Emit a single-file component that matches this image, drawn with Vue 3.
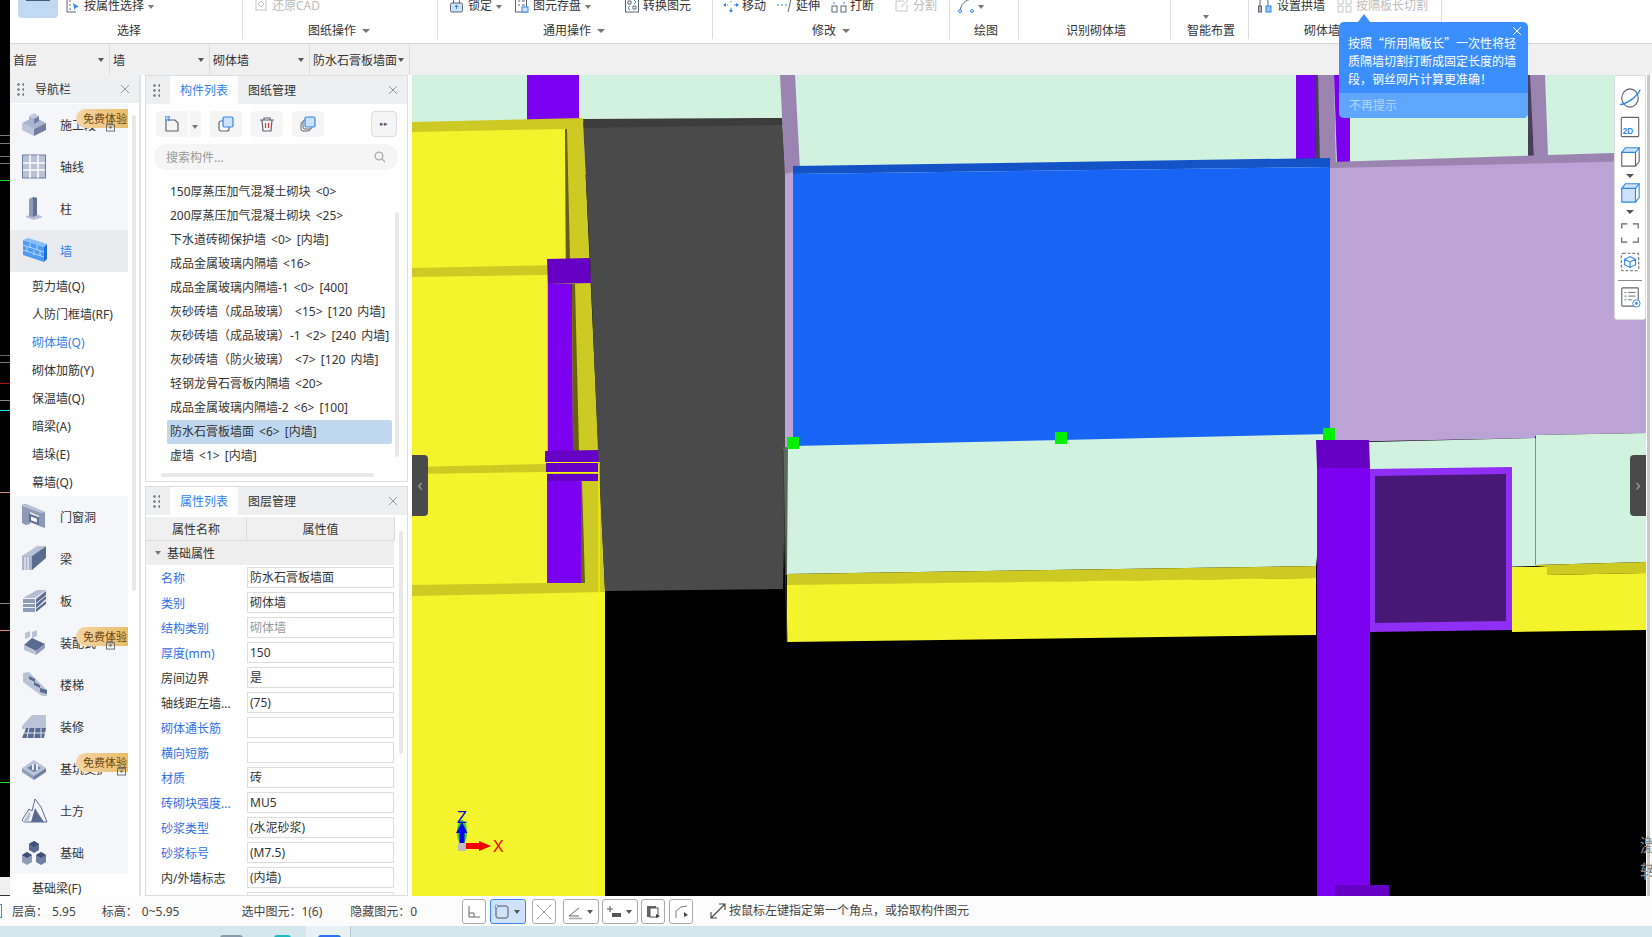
<script setup>
const D = '#5d6473'
const B = '#2f86ee'
const G = '#c4c4c4'
const ICONS = {
  attr: `<path d="M11 1H2v14h9" fill="none" stroke="${D}"/><path d="M4 4h2M4 8h2M4 12h2" stroke="${D}"/><path d="M8 6l6 4-3 .5L9.500 13z" fill="${B}"/>`,
  cad: `<path d="M3 2h10M3 13h10M3 1v13M13 1v13" stroke="${G}" fill="none"/><path d="M5 7l3-3 3 3-3 3z" fill="none" stroke="${G}"/>`,
  lock: `<rect x="1.500" y="6" width="12" height="9" rx="1.500" fill="#cfe2fb" stroke="${D}"/><path d="M4.500 6V3.500a3 3 0 016 0V6" fill="none" stroke="${D}"/><path d="M7.500 8v4M6 10l1.500-2 1.500 2" stroke="${B}" fill="none"/>`,
  save: `<rect x="1.500" y="1" width="11" height="14" fill="none" stroke="${D}"/><path d="M4 4h2M8 4h3M4 8h2M8 8h3" stroke="${D}"/><rect x="8" y="10" width="6" height="5" fill="#cfe2fb" stroke="${B}"/>`,
  conv: `<rect x="1.500" y="1" width="13" height="14" fill="none" stroke="${D}"/><path d="M4 4h3v3H4zM9 9h3v3H9z" fill="none" stroke="${D}"/><path d="M10 3l2 2-2 2M6 9l-2 2 2 2" stroke="${B}" fill="none"/>`,
  move: `<path d="M8 1v4M8 11v4M1 8h4M11 8h4" stroke="${B}" stroke-dasharray="2 1"/><path d="M8 0l2 3H6zM8 16l-2-3h4zM0 8l3-2v4zM16 8l-3 2V6z" fill="${B}"/>`,
  ext: `<path d="M0 8h2M4 8h2M8 8h2" stroke="${B}"/><path d="M14 2l-3 13" stroke="${D}" fill="none"/>`,
  brk: `<rect x="1" y="9" width="5" height="6" fill="none" stroke="${D}"/><rect x="10" y="9" width="5" height="6" fill="none" stroke="${D}"/><path d="M3 1v2M3 5v2M13 1v2M13 5v2" stroke="${B}"/><path d="M1 3l2-2 2 2M11 3l2-2 2 2" stroke="${B}" fill="none"/>`,
  cut: `<path d="M2 4h8M2 4v10h11V8" stroke="${G}" fill="none"/><path d="M7 10l7-7" stroke="${G}" fill="none"/>`,
  draw: `<path d="M2 14C3 7 7 3 14 2" fill="none" stroke="${D}"/><circle cx="2" cy="14" r="1.500" fill="#fff" stroke="${B}"/><circle cx="14" cy="14" r="1.500" fill="#fff" stroke="${B}"/>`,
  arch: `<path d="M2 15V4a4 4 0 018 0v11" fill="none" stroke="${D}"/><rect x="0.500" y="9" width="3" height="6" fill="none" stroke="${D}"/><rect x="8" y="9" width="5" height="6" fill="#9cc4f5" stroke="${B}"/>`,
  grid: `<path d="M1 1h5v6H1zM1 9h5v6H1zM9 1h5v6H9zM9 9h5v6H9z" fill="none" stroke="${G}"/>`,
  newdoc: `<path d="M2 4h9l3 3v8H2z" fill="none" stroke="${D}" stroke-width="1.200"/><path d="M1 0h5v5H1z" fill="#3a8ef0" opacity=".85"/><path d="M1 2h5M3 0v5" stroke="#fff" stroke-width=".6"/>`,
  copy: `<rect x="1" y="5" width="10" height="10" rx="2" fill="#fff" stroke="${D}" stroke-width="1.200"/><rect x="5" y="1" width="10" height="10" rx="1.500" fill="#cfe2fb" stroke="${B}" stroke-width="1.200"/>`,
  del: `<path d="M1 4h14M5 4V2h6v2M3 4l1 11h8l1-11" fill="none" stroke="${D}" stroke-width="1.200"/><path d="M6.500 7v5M9.500 7v5" stroke="#e33" stroke-width="1.200"/>`,
  multi: `<rect x="1" y="6" width="9" height="9" rx="2" fill="none" stroke="${D}"/><rect x="3" y="4" width="9" height="9" rx="2" fill="#fff" stroke="${D}"/><rect x="5" y="1" width="10" height="10" rx="1.500" fill="#cfe2fb" stroke="${B}" stroke-width="1.200"/>`
}
const NAV_ICONS = {
  seg: `<path d="M0 11L12 5l12 6-12 6z" fill="#a9b4cd"/><path d="M0 11l12 6v7L0 18z" fill="#bcc5d9"/><path d="M24 11l-12 6v7l12-6z" fill="#6f7fa3"/><path d="M7 4l5-3 5 3-5 3z" fill="#c3cbdd"/><path d="M7 4l5 3v5L7 9z" fill="#aab4cc"/><path d="M17 4l-5 3v5l5-3z" fill="#6f7fa3"/>`,
  axis: `<rect x="0.500" y="1" width="23" height="23" fill="#b9c3d8" stroke="#6a7ba0"/><path d="M8 1v23M16 1v23M1 9h22M1 16h22" stroke="#fff" stroke-width="1.500"/>`,
  col: `<path d="M3 21l9-4 9 4-9 3z" fill="#b4bdd3"/><path d="M7 3l4-2 4 1v17l-4 2-4-1z" fill="#8d9ab8"/><path d="M11 1l4 1v17l-4 2z" fill="#5f6f96"/>`,
  wall: `<path d="M1 2l21 7v15L1 17z" fill="#4d9bf3"/><path d="M1 2L6 0l19 6-3 3z" fill="#86bcf8"/><path d="M22 9l3-3v15l-3 3z" fill="#1b70e0"/><path d="M1 7l21 7M1 12l21 7M8 5v5M15 7v5M5 9v5M12 12v5M18 13v5" stroke="#cfe2fb" stroke-width=".8"/>`,
  door: `<path d="M0 1l4-1 19 8v16l-6-2V12L8 8v12l-4 1-4-2z" fill="#8c99b7"/><path d="M4 0l19 8-4 1L0 2z" fill="#b9c3d8"/><path d="M8 11l8 3v6l-8-3z" fill="none" stroke="#5f6f96" stroke-width="2"/>`,
  beam: `<path d="M0 10L20 0v14L10 24H0z" fill="#a9b4cd"/><path d="M10 10L24 0v12L10 24z" fill="#5a6b92"/><path d="M0 10L15 0h9L10 10z" fill="#b9c3d8"/><path d="M3 11v13M6 11v13" stroke="#fff"/>`,
  slab: `<path d="M1 10L15 2h9l-11 8z" fill="#b4bdd3"/><path d="M1 11h12v4H1zM1 16h12v3H1zM1 20h12v4H1z" fill="#8e9bb9"/><path d="M14 11l10-8v4l-10 8zM14 16l10-8v3l-10 9zM14 21l10-8v3l-10 8z" fill="#5a6b92"/>`,
  fab: `<path d="M2 15l8-7 13 6-9 7z" fill="#5a6b92"/><path d="M2 15l12 6v4L2 20z" fill="#b9c3d8"/><path d="M23 14v4l-9 7v-4z" fill="#8e9bb9"/><path d="M3 3l5-2v6l-5 2zM10 2l5-2v6l-5 2z" fill="#b9c3d8"/>`,
  stair: `<path d="M1 1l6-1 18 18v6h-5L1 10z" fill="#b9c3d8"/><path d="M7 4l6 3v3l-6-3zM12 10l6 3v3l-6-3zM18 16l7 2v4l-7-2z" fill="#5a6b92"/>`,
  deco: `<path d="M0 12L10 1h14v14H0z" fill="#b9c3d8"/><path d="M0 24l4-10h20l-2 10z" fill="#5a6b92"/><path d="M1 19h22M7 14l-2 10M13 14l-1 10M19 14v10" stroke="#dfe4ee"/>`,
  pit: `<path d="M0 12L12 4l12 8-12 8z" fill="#b9c3d8"/><path d="M0 12l12 8v4L0 16z" fill="#8e9bb9"/><path d="M24 12l-12 8v4l12-8z" fill="#6f7fa3"/><path d="M5 12l7-4 7 4-7 4z" fill="#6f7fa3"/><path d="M10 8h2v6h-2zM14 8h2v6h-2z" fill="#e6eaf2"/>`,
  earth: `<path d="M0 22L7 11l3 2L13 1l6 8 6 15H2z" fill="none" stroke="#5a6b92"/><path d="M9 24l4-14 3 5 6 9z" fill="#5a6b92"/><path d="M1 24l6-10 2 2-3 8z" fill="#b9c3d8"/>`,
  fnd: `<path d="M7 4l5-3 5 3v6l-5 3-5-3z" fill="#5a6b92"/><path d="M0 15l5-3 5 3v7l-5 3-5-3z" fill="#8e9bb9"/><path d="M14 15l5-3 5 3v7l-5 3-5-3z" fill="#6f7fa3"/><path d="M7 4l5 3 5-3-5-3zM0 15l5 3 5-3-5-3zM14 15l5 3 5-3-5-3z" fill="#3f4f78"/>`
}
const groups = [
  { w: 233, pad: 8, lx: 107, label: '选择', tools: [{ sel: true, w: 47 }, { icon: 'attr', text: '按属性选择', caret: true, w: 90 }] },
  { w: 195, pad: 10, lx: 65, label: '图纸操作', lc: true, tools: [{ icon: 'cad', text: '还原CAD', off: true, w: 100 }] },
  { w: 275, pad: 11, lx: 105, label: '通用操作', lc: true, tools: [{ icon: 'lock', text: '锁定', caret: true, w: 65 }, { icon: 'save', text: '图元存盘', caret: true, w: 110 }, { icon: 'conv', text: '转换图元', w: 80 }] },
  { w: 237, pad: 10, lx: 99, label: '修改', lc: true, tools: [{ icon: 'move', text: '移动', w: 54 }, { icon: 'ext', text: '延伸', w: 54 }, { icon: 'brk', text: '打断', w: 63 }, { icon: 'cut', text: '分割', off: true, w: 50 }] },
  { w: 69, pad: 8, lx: 24, label: '绘图', tools: [{ icon: 'draw', text: '', caret: true, w: 40 }] },
  { w: 152, pad: 0, lx: 47, label: '识别砌体墙', tools: [] },
  { w: 78, pad: 31, lx: 16, label: '智能布置', tools: [{ caret: true, text: '', w: 20, low: true }] },
  { w: 193, pad: 9, lx: 55, label: '砌体墙', tools: [{ icon: 'arch', text: '设置拱墙', w: 79 }, { icon: 'grid', text: '按隔板长切割', off: true, w: 100 }] }
]
const selects = ['首层', '墙', '砌体墙', '防水石膏板墙面']
const stripLines = [
  [135, '#777'], [143, '#777'], [156, '#777'], [163, '#777'], [180, '#19e619'], [355, '#666'], [362, '#777'],
  [383, '#a11'], [400, '#888'], [410, '#19e6e6'], [492, '#e58a70'], [603, '#888'], [630, '#e58a70'], [782, '#19e619']
]
const navItems = [
  { t: '施工段', i: 'seg', badge: true, lock: 46 },
  { t: '轴线', i: 'axis' },
  { t: '柱', i: 'col' },
  { t: '墙', i: 'wall', on: true },
  { t: '剪力墙(Q)', sub: true },
  { t: '人防门框墙(RF)', sub: true },
  { t: '砌体墙(Q)', sub: true, blue: true },
  { t: '砌体加筋(Y)', sub: true },
  { t: '保温墙(Q)', sub: true },
  { t: '暗梁(A)', sub: true },
  { t: '墙垛(E)', sub: true },
  { t: '幕墙(Q)', sub: true },
  { t: '门窗洞', i: 'door' },
  { t: '梁', i: 'beam' },
  { t: '板', i: 'slab' },
  { t: '装配式', i: 'fab', badge: true, lock: 46 },
  { t: '楼梯', i: 'stair' },
  { t: '装修', i: 'deco' },
  { t: '基坑支护', i: 'pit', badge: true, lock: 57 },
  { t: '土方', i: 'earth' },
  { t: '基础', i: 'fnd' },
  { t: '基础梁(F)', sub: true }
]
const listBtns = [
  { i: 'newdoc', c: 'tb-new' }, { i: 'copy', c: 'tb-a' }, { i: 'del', c: 'tb-b' }, { i: 'multi', c: 'tb-b' }
]
const parts = [
  '150厚蒸压加气混凝土砌块 <0>',
  '200厚蒸压加气混凝土砌块 <25>',
  '下水道砖砌保护墙 <0> [内墙]',
  '成品金属玻璃内隔墙 <16>',
  '成品金属玻璃内隔墙-1 <0> [400]',
  '灰砂砖墙（成品玻璃） <15> [120 内墙]',
  '灰砂砖墙（成品玻璃）-1 <2> [240 内墙]',
  '灰砂砖墙（防火玻璃） <7> [120 内墙]',
  '轻钢龙骨石膏板内隔墙 <20>',
  '成品金属玻璃内隔墙-2 <6> [100]',
  '防水石膏板墙面 <6> [内墙]',
  '虚墙 <1> [内墙]'
]
const props = [
  { n: '名称', v: '防水石膏板墙面', b: 1 },
  { n: '类别', v: '砌体墙', b: 1 },
  { n: '结构类别', v: '砌体墙', b: 1, g: 1 },
  { n: '厚度(mm)', v: '150', b: 1 },
  { n: '房间边界', v: '是' },
  { n: '轴线距左墙...', v: '(75)' },
  { n: '砌体通长筋', v: '', b: 1 },
  { n: '横向短筋', v: '', b: 1 },
  { n: '材质', v: '砖', b: 1 },
  { n: '砖砌块强度...', v: 'MU5', b: 1 },
  { n: '砂浆类型', v: '(水泥砂浆)', b: 1 },
  { n: '砂浆标号', v: '(M7.5)', b: 1 },
  { n: '内/外墙标志', v: '(内墙)' },
  { n: '', v: '' }
]
const OL = '#cdca23', Y = '#f3f42b', P = '#7b00f0', DP = '#6500c4', M = '#d0f2df', L = '#bca3d6', LD = '#9b84b0', SH = '#66600f'
const shapes = [
  [M, '412,75 1646,75 1646,175 412,175'],
  [P, '527,75 579,75 579,122 527,122'],
  [P, '1296,75 1317,75 1317,162 1296,162'],
  ['#4a3f5a', '1316,75 1320,75 1322,165 1316,165'],
  [LD, '1318,75 1334,75 1336,165 1320,165'],
  [P, '1334,75 1350,75 1350,165 1337,165'],
  ['#4a3f5a', '1528,75 1533,75 1534,158 1528,158'],
  [LD, '1530,75 1545,75 1548,156 1534,158'],
  // left yellow block
  [OL, '412,122 583,118 605,590 605,896 412,896'],
  [Y, '412,132 565,129 565,265 412,268'],
  [SH, '565,129 567,129 570,259 566,259'],
  [Y, '412,277 547,275 547,464 412,467'],
  [Y, '412,474 547,472 547,583 412,585'],
  [Y, '412,596 605,592 605,896 412,896'],
  [DP, '547,259 590,258 591,283 548,284'],
  [P, '548,284 572,284 573,451 548,451'],
  [SH, '572,284 575,284 579,451 573,451'],
  [DP, '545,451 599,450 599,462 545,462'],
  [DP, '546,463 598,463 598,472 546,472'],
  [DP, '547,474 598,474 598,481 547,481'],
  [P, '547,481 581,481 581,583 547,583'],
  [SH, '581,481 582,481 585,583 581,583'],
  // grey wall
  ['#4a4a4a', '583,122 782,119 786,174 786,447 783,589 605,591 598,450 590,258'],
  ['#3c3c3c', '583,119 782,118 783,125 584,128'],
  // centre
  [LD, '780,75 795,75 800,170 785,176'],
  [L, '785,174 793,172 793,448 785,448'],
  ['#5a6a62', '783,447 788,447 788,575 785,575'],
  [M, '788,447 793,445 1330,432 1316,566 787,574'],
  [OL, '787,574 1316,566 1316,578 787,586'],
  [Y, '787,585 1316,578 1316,635 787,642'],
  ['#1452c8', '793,166 1330,158 1330,167 793,174'],
  ['#1864f5', '793,174 1330,167 1330,434 793,446'],
  // right wall
  [LD, '1330,162 1646,152 1646,162 1330,169'],
  [L, '1330,168 1646,161 1646,433 1536,435 1535,438 1330,442'],
  [M, '1369,442 1536,438 1536,566 1369,570'],
  [M, '1536,435 1646,433 1646,562 1536,565'],
  [OL, '1536,565 1646,562 1646,573 1547,575 1547,567 1536,566'],
  [Y, '1512,567 1547,567 1547,575 1646,573 1646,630 1512,632'],
  ['#8f2ff5', '1370,469 1512,467 1512,630 1370,632'],
  ['#471876', '1375,476 1506,474 1506,621 1375,623'],
  [DP, '1316,440 1369,440 1370,468 1317,468'],
  [P, '1317,468 1370,468 1370,896 1317,896'],
  [DP, '1335,885 1389,885 1389,896 1335,896']
]
const handles = [[787, 437], [1055, 432], [1323, 428]]
</script>

<template>
  <div class="screen">
    <div class="top">
      <div class="strip">
        <i v-for="l in stripLines" :key="l[0]" class="strip-line" :style="{ top: l[0] + 'px', background: l[1] }"></i>
        <i class="strip-end"></i>
      </div>
      <div class="main">
        <header class="ribbon">
          <section v-for="g in groups" :key="g.label" class="group" :style="{ width: g.w + 'px' }">
            <div class="tools" :style="{ paddingLeft: g.pad + 'px' }">
              <div v-for="(t, n) in g.tools" :key="n" class="tool" :class="{ off: t.off, low: t.low }" :style="{ width: t.w + 'px' }">
                <span v-if="t.sel" class="sel-btn"><i></i></span>
                <svg v-if="t.icon" class="tool-icon" viewBox="0 0 16 16" v-html="ICONS[t.icon]"></svg>
                <span v-if="t.text">{{ t.text }}</span>
                <i v-if="t.caret" class="caret"></i>
              </div>
            </div>
            <div class="group-label" :style="{ paddingLeft: g.lx + 'px' }">{{ g.label }}<i v-if="g.lc" class="caret big"></i></div>
          </section>
        </header>
        <div class="selects">
          <div v-for="s in selects" :key="s" class="select"><span>{{ s }}</span><i class="caret"></i></div>
        </div>
        <div class="work">
          <aside class="nav">
            <div class="panel-head">
              <span class="grip"></span>
              <span class="nav-title">导航栏</span>
              <svg class="close" viewBox="0 0 10 10"><path d="M1 1l8 8M9 1l-8 8" stroke="#999" fill="none"/></svg>
            </div>
            <div class="nav-body">
              <div class="nav-list">
                <div v-for="it in navItems" :key="it.t" class="nav-item" :class="{ sub: it.sub, on: it.on, blue: it.blue || it.on }">
                  <svg v-if="it.i" class="nav-icon" viewBox="0 0 26 26" v-html="NAV_ICONS[it.i]"></svg>
                  <span>{{ it.t }}</span>
                  <span v-if="it.badge" class="badge">免费体验</span>
                  <svg v-if="it.lock" class="lock" :style="{ left: it.lock + 50 + 'px' }" viewBox="0 0 10 10"><rect x="0.500" y="2.500" width="9" height="7" fill="none" stroke="#5d6473"/><path d="M3 2.500V1h4v1.500" fill="none" stroke="#5d6473"/><circle cx="5" cy="5.500" r="1.300" fill="#5d6473"/></svg>
                </div>
              </div>
              <i class="nav-scroll"></i>
            </div>
          </aside>
          <div class="side">
            <section class="list-panel">
              <div class="panel-head">
                <span class="grip"></span>
                <span class="tab active">构件列表</span>
                <span class="tab">图纸管理</span>
                <svg class="close" viewBox="0 0 10 10"><path d="M1 1l8 8M9 1l-8 8" stroke="#999" fill="none"/></svg>
              </div>
              <div class="list-tools">
                <template v-for="b in listBtns" :key="b.i">
                  <button class="tb" :class="b.c"><svg viewBox="0 0 16 16" v-html="ICONS[b.i]"></svg></button>
                  <button v-if="b.i === 'newdoc'" class="tb-drop"><i class="caret"></i></button>
                </template>
                <button class="tb-more">▸▸</button>
              </div>
              <div class="search">
                <span>搜索构件...</span>
                <svg viewBox="0 0 12 12"><circle cx="5" cy="5" r="3.800" fill="none" stroke="#aaa" stroke-width="1.300"/><path d="M8 8l3 3" stroke="#aaa" stroke-width="1.300"/></svg>
              </div>
              <ul class="parts">
                <li v-for="(p, n) in parts" :key="p" :class="{ cur: n === 10 }">{{ p }}</li>
              </ul>
              <i class="list-vscroll"></i>
              <i class="list-hscroll"></i>
            </section>
            <section class="prop-panel">
              <div class="panel-head">
                <span class="grip"></span>
                <span class="tab active">属性列表</span>
                <span class="tab">图层管理</span>
                <svg class="close" viewBox="0 0 10 10"><path d="M1 1l8 8M9 1l-8 8" stroke="#999" fill="none"/></svg>
              </div>
              <div class="prop-head"><span>属性名称</span><span>属性值</span></div>
              <div class="prop-group"><i class="caret"></i>基础属性</div>
              <div v-for="(r, n) in props" :key="n" class="prop-row">
                <span class="prop-name" :class="{ link: r.b }">{{ r.n }}</span>
                <span class="prop-val" :class="{ gray: r.g }">{{ r.v }}</span>
              </div>
              <i class="prop-scroll"></i>
            </section>
          </div>
          <main class="view">
            <svg class="scene" viewBox="412 75 1234 821" preserveAspectRatio="none">
              <polygon v-for="(s, n) in shapes" :key="n" :points="s[1]" :fill="s[0]" />
              <path d="M546 462.500H599V896M546 472.500H598" fill="none" stroke="#f7f700" stroke-width="1.200" />
              <path d="M783 450L787 642" stroke="#3d3d2a" fill="none" />
              <path d="M1535.500 438V565" stroke="#7d8f86" fill="none" />
              <rect v-for="h in handles" :key="h[0]" :x="h[0]" :y="h[1]" width="12" height="12" fill="#00f000" />
              <ellipse cx="462" cy="832" rx="5" ry="12" fill="#2fd02f" />
              <rect x="458" y="843" width="8" height="8" fill="#bdbdbd" />
              <path d="M459.500 843V833H456L462 822L467.500 833H464.500V843Z" fill="#0000f0" />
              <path d="M466 843H479V841L491 846L479 851V849H466Z" fill="#f00000" />
              <text x="457" y="823" class="axis-z">Z</text>
              <text x="493" y="852" class="axis-x">X</text>
            </svg>
            <div class="handle left">‹</div>
            <div class="handle right">›</div>
            <div class="view-tools">
              <svg viewBox="0 0 24 24"><ellipse cx="12" cy="12" rx="9" ry="10" fill="none" stroke="#5d6473" stroke-width="1.200"/><path d="M1 19C7 19 20 11 23 3" fill="none" stroke="#2f86ee" stroke-width="1.500"/></svg>
              <svg viewBox="0 0 24 24"><rect x="2.500" y="1.500" width="19" height="21" rx="1" fill="none" stroke="#5d6473" stroke-width="1.200"/><text x="4" y="20" class="t2d">2D</text></svg>
              <svg viewBox="0 0 24 24"><path d="M3 8h15v15H3z" fill="#fff" stroke="#5d6473" stroke-width="1.200"/><path d="M3 8l4-5h15l-4 5z" fill="#cfe2fb" stroke="#2f86ee" stroke-width="1.200"/><path d="M18 23l4-5V3" fill="none" stroke="#5d6473" stroke-width="1.200"/></svg>
              <i class="vt-caret"></i>
              <svg viewBox="0 0 24 24"><path d="M3 8h15v15H3z" fill="#cfe2fb" stroke="#2f86ee" stroke-width="1.200"/><path d="M3 8l4-5h15l-4 5z" fill="#cfe2fb" stroke="#2f86ee" stroke-width="1.200"/><path d="M18 23l4-5V3" fill="none" stroke="#2f86ee" stroke-width="1.200"/></svg>
              <i class="vt-caret"></i>
              <svg class="vt-frame" viewBox="0 0 24 24"><path d="M3 7V2h6M15 2h6v5M21 17v5h-6M9 22H3v-5" fill="none" stroke="#5d6473" stroke-width="1.300"/></svg>
              <svg viewBox="0 0 24 24"><rect x="2.500" y="2.500" width="19" height="19" rx="2" fill="none" stroke="#5d6473" stroke-width="1.200" stroke-dasharray="3 2"/><path d="M12 6l6 3v6l-6 3-6-3V9zM6 9l6 3 6-3M12 12v6" fill="none" stroke="#2f86ee" stroke-width="1.200"/></svg>
              <i class="vt-div"></i>
              <svg viewBox="0 0 24 24"><rect x="3" y="2" width="18" height="20" rx="1" fill="none" stroke="#5d6473" stroke-width="1.200"/><path d="M6 7h2M10 7h8M6 11h2M10 11h8M6 15h2M10 15h4" stroke="#5d6473"/><circle cx="19" cy="19" r="4" fill="#fff" stroke="#2f86ee"/><circle cx="19" cy="19" r="1.500" fill="#2f86ee"/></svg>
            </div>
          </main>
          <div class="gutter"><i></i></div>
        </div>
      </div>
    </div>
    <footer class="status">
      <span class="st-box"></span>
      <span class="st st-h">层高：</span><span class="st st-hv">5.95</span>
      <span class="st st-l">标高：</span><span class="st st-lv">0~5.95</span>
      <span class="st st-s">选中图元：1(6)</span>
      <span class="st st-a">隐藏图元：</span><span class="st">0</span>
      <div class="st-tools">
        <button class="sb"><svg viewBox="0 0 16 16"><path d="M3 2v11h11M3 9h5v4" fill="none" stroke="#666"/></svg></button>
        <button class="sb wide cur"><svg viewBox="0 0 16 16"><rect x="2" y="2" width="12" height="12" rx="2" fill="none" stroke="#555"/><circle cx="2.500" cy="2.500" r="1.500" fill="#fff" stroke="#2f86ee"/></svg><i class="caret"></i></button>
        <button class="sb"><svg viewBox="0 0 16 16"><path d="M1 1l14 14M15 1L1 15" stroke="#999" fill="none"/></svg></button>
        <button class="sb wide"><svg viewBox="0 0 16 16"><path d="M2 12L12 4M2 12h10" stroke="#666" fill="none"/><path d="M2 14.500h13" stroke="#aaa" stroke-width="1.500"/></svg><i class="caret"></i></button>
        <button class="sb wide"><svg viewBox="0 0 16 16"><path d="M1 5h6M4 2v6" stroke="#555" fill="none"/><rect x="6" y="9" width="9" height="4" fill="#555"/></svg><i class="caret"></i></button>
        <button class="sb"><svg viewBox="0 0 16 16"><rect x="2" y="2" width="9" height="11" fill="#666"/><rect x="5" y="4" width="8" height="9" fill="#fff" stroke="#555"/><path d="M11 10l4 2-4 2z" fill="#444"/></svg></button>
        <button class="sb"><svg viewBox="0 0 16 16"><path d="M3 14V7L8 3l6-1" fill="none" stroke="#777"/><path d="M11 8l4 3-4 2z" fill="#444"/></svg></button>
      </div>
      <svg class="st-arrow" viewBox="0 0 16 16"><path d="M1 15L15 1M9 1h6v6M1 9v6h6" fill="none" stroke="#444" stroke-width="1.100"/></svg>
      <span class="st st-msg">按鼠标左键指定第一个角点，或拾取构件图元</span>
    </footer>
    <div class="taskbar">
      <i class="tk tk-g"></i><i class="tk tk-t"></i>
      <div class="tk-active"><i class="tk tk-b"></i></div>
    </div>
    <div class="tip">
      <i class="tip-arrow"></i>
      <svg class="tip-x" viewBox="0 0 10 10"><path d="M1 1l8 8M9 1l-8 8" stroke="#fff" fill="none"/></svg>
      <div class="tip-text">
        <div>按照“所用隔板长”一次性将轻</div>
        <div>质隔墙切割打断成固定长度的墙</div>
        <div>段，钢丝网片计算更准确！</div>
      </div>
      <div class="tip-foot">不再提示</div>
    </div>
    <div class="mark"><span>激</span><span>转</span></div>
  </div>
</template>

<style>
html, body { margin: 0; padding: 0; background: #fff; }
</style>

<style scoped>
* { box-sizing: border-box; }
i { display: block; font-style: normal; }
.screen {
  position: relative; width: 1652px; height: 937px; overflow: hidden; display: flex; flex-direction: column;
  font-family: "Noto Sans", "Noto Sans CJK SC", sans-serif; font-size: 12px; color: #333; background: #fff;
}
.top { display: flex; height: 896px; }
.strip { position: relative; width: 10px; background: #000; }
.strip-line { position: absolute; left: 0; width: 10px; height: 1px; }
.strip-end { position: absolute; left: 0; bottom: 0; width: 10px; height: 19px; background: #f0f0f0; border-bottom: 1px solid #333; }
.main { width: 1642px; display: flex; flex-direction: column; }

.ribbon { display: flex; height: 44px; background: #fff; border-bottom: 1px solid #d8d8d8; }
.group { height: 39px; border-right: 1px solid #ddd; flex: none; }
.tools { display: flex; height: 18px; align-items: flex-start; }
.tool { display: flex; align-items: flex-start; line-height: 12px; color: #333; gap: 3px; flex: none; white-space: nowrap; }
.tool.off { color: #bcbcbc; }
.tool.low { padding-top: 10px; }
.sel-btn { display: block; width: 40px; height: 18px; background: #c0d8f2; border-radius: 0 0 4px 4px; padding: 0 8px; }
.sel-btn i { height: 1px; background: #4b5a70; }
.tool-icon { width: 16px; height: 16px; margin-top: -3px; flex: none; overflow: hidden; }
.caret { display: inline-block; width: 0; height: 0; border-left: 3px solid transparent; border-right: 3px solid transparent; border-top: 4px solid #777; }
.tool .caret { margin-top: 5px; margin-left: 1px; }
.caret.big { border-left-width: 4px; border-right-width: 4px; border-top-width: 4px; margin-left: 6px; vertical-align: 2px; }
.group-label { margin-top: 4px; height: 17px; line-height: 17px; white-space: nowrap; color: #333; }

.selects { display: flex; height: 31px; background: #f0f0f0; flex: none; }
.select { width: 100px; display: flex; align-items: center; justify-content: space-between; padding: 0 5px 0 3px; border-right: 1px solid #dcdcdc; }
.select .caret { border-top-color: #555; }

.work { display: flex; height: 821px; }
.panel-head { display: flex; align-items: stretch; height: 28px; background: #eeeff1; position: relative; flex: none; }
.grip { width: 8px; height: 15px; margin: 7px 0 0 6px; flex: none; background-image: radial-gradient(circle, #888 1.200px, transparent 1.500px); background-size: 5px 5px; }
.close { position: absolute; right: 9px; top: 9px; width: 10px; height: 10px; }
.nav { width: 131px; border-right: 2px solid #e2e2e2; position: relative; flex: none; }
.nav-title { margin-left: 11px; line-height: 30px; }
.nav-body { position: relative; height: 792px; overflow: hidden; background: #fff; padding-top: 1px; }
.nav-list { width: 118px; }
.nav-item { position: relative; height: 42px; display: flex; align-items: center; background: #f4f6fa; padding-left: 12px; gap: 12px; }
.nav-item.on { background: #e9ebef; }
.nav-item.blue { color: #2f7ff0; }
.nav-item.sub { height: 28px; padding-left: 22px; background: #fff; }
.nav-icon { width: 26px; height: 26px; flex: none; }
.lock { position: absolute; top: 18px; width: 9px; height: 10px; }
.badge { position: absolute; left: 66px; top: 5px; width: 52px; height: 19px; line-height: 19px; padding-left: 7px; font-size: 11px; color: #6b4510; border-radius: 10px 0 0 10px; background: linear-gradient(90deg, #f3d4a4, #e9bd6a); white-space: nowrap; overflow: hidden; }
.nav-scroll { position: absolute; left: 122px; top: 12px; width: 4px; height: 476px; background: #e8e8e8; border-radius: 2px; }

.side { width: 263px; margin-left: 4px; display: flex; flex-direction: column; gap: 4px; flex: none; }
.list-panel { position: relative; height: 407px; border: 1px solid #ddd; background: #fff; overflow: hidden; }
.prop-panel { position: relative; flex: 1; border: 1px solid #ddd; background: #fff; overflow: hidden; }
.tab { width: 68px; line-height: 30px; text-align: center; flex: none; }
.tab.active { color: #2f7ff0; background: #fff; margin-left: 10px; }
.list-tools { display: flex; height: 26px; margin-top: 7px; padding-left: 10px; position: relative; }
.tb { width: 32px; height: 26px; border: 0; padding: 5px 8px; border-radius: 4px; background: #f5f5f5; flex: none; }
.tb svg { width: 16px; height: 16px; display: block; }
.tb-new { border-radius: 4px 0 0 4px; }
.tb-drop { width: 12px; height: 26px; border: 0; padding: 0; margin-left: 1px; background: #f5f5f5; border-radius: 0 4px 4px 0; flex: none; }
.tb-a { margin-left: 9px; }
.tb-b { margin-left: 9px; }
.tb-more { width: 26px; height: 26px; margin-left: 47px; border: 1px solid #ddd; border-radius: 4px; background: #f5f5f5; font-size: 7px; color: #555; padding: 0; }
.search { margin: 7px 0 0 8px; width: 244px; height: 26px; border-radius: 13px; background: #f5f5f5; display: flex; align-items: center; justify-content: space-between; padding: 0 12px; color: #999; }
.search svg { width: 12px; height: 12px; }
.parts { list-style: none; margin: 10px 0 0; padding: 0; }
.parts li { height: 24px; line-height: 23px; margin-left: 21px; padding-left: 3px; width: 225px; white-space: pre; color: #333; border-radius: 2px; word-spacing: 2px; }
.parts li.cur { background: #c0d7f0; }
.list-vscroll { position: absolute; left: 249px; top: 136px; width: 4px; height: 245px; background: #e8e8e8; border-radius: 2px; }
.list-hscroll { position: absolute; left: 15px; top: 397px; width: 213px; height: 4px; background: #e8e8e8; border-radius: 2px; }

.prop-head { display: flex; height: 24px; margin-top: 2px; width: 249px; background: #f0f0f0; border-bottom: 1px solid #ddd; border-right: 1px solid #ddd; }
.prop-head span { line-height: 25px; text-align: center; }
.prop-head span:first-child { width: 101px; border-right: 1px solid #ddd; }
.prop-head span:last-child { width: 147px; }
.prop-group { height: 24px; width: 248px; background: #eee; line-height: 26px; padding-left: 21px; position: relative; margin-bottom: 2px; }
.prop-group .caret { position: absolute; left: 9px; top: 10px; }
.prop-row { display: flex; align-items: center; height: 21px; margin-bottom: 4px; }
.prop-name { width: 101px; padding-left: 15px; white-space: nowrap; color: #333; }
.prop-name.link { color: #2f6fe8; }
.prop-val { width: 147px; height: 21px; line-height: 19px; border: 1px solid #ddd; padding-left: 2px; color: #333; }
.prop-val.gray { color: #999; }
.prop-scroll { position: absolute; left: 253px; top: 44px; width: 4px; height: 223px; background: #e8e8e8; border-radius: 2px; }

.view { position: relative; width: 1234px; margin-left: 4px; overflow: hidden; background: #000; flex: none; }
.scene { display: block; width: 1234px; height: 821px; }
.axis-z { fill: #0000e0; font-size: 16px; font-family: "Liberation Sans", sans-serif; }
.axis-x { fill: #f00000; font-size: 16px; font-family: "Liberation Sans", sans-serif; }
.handle { position: absolute; top: 380px; width: 16px; height: 61px; background: #4a4a4a; color: #999; line-height: 58px; text-align: center; font-size: 18px; }
.handle.left { left: 0; border-radius: 0 4px 4px 0; }
.handle.right { right: 0; border-radius: 4px 0 0 4px; }
.view-tools { position: absolute; right: 0; top: 0; width: 32px; height: 245px; background: #fff; border: 1px solid #ddd; border-radius: 3px; display: flex; flex-direction: column; align-items: center; padding-top: 11px; }
.view-tools svg { width: 22px; height: 22px; flex: none; margin-bottom: 7px; }
.view-tools .vt-frame { margin-top: 5px; }
.vt-caret { width: 0; height: 0; border-left: 4px solid transparent; border-right: 4px solid transparent; border-top: 4px solid #555; margin: 0 0 3px; flex: none; }
.t2d { font-size: 9px; font-weight: 700; fill: #2f86ee; font-family: "Liberation Sans", sans-serif; }
.vt-div { width: 24px; height: 1px; background: #888; margin: 0 0 5px; flex: none; }
.gutter { width: 6px; background: #fff; flex: none; }
.gutter i { width: 3px; height: 100%; margin-left: 1px; background: #c8c8c8; }

.status { height: 30px; background: #fcfcfc; display: flex; align-items: center; color: #444; flex: none; position: relative; }
.st { white-space: pre; }
.st-box { width: 2px; height: 14px; border: 1px solid #3a8ef0; border-left: 0; flex: none; }
.st-h { margin-left: 10px; }
.st-hv { margin-left: 4px; }
.st-l { margin-left: 26px; }
.st-lv { margin-left: 4px; }
.st-s { margin-left: 62px; }
.st-a { margin-left: 28px; }
.st-tools { position: absolute; left: 462px; top: 3px; display: flex; }
.sb { width: 24px; height: 25px; border: 1px solid #aaa; border-radius: 3px; background: #fff; padding: 3px; display: flex; align-items: center; gap: 4px; flex: none; margin-right: 4px; }
.sb:nth-child(2) { margin-right: 6px; }
.sb:nth-child(3) { margin-right: 7px; }
.sb:nth-child(4), .sb:nth-child(5) { margin-right: 3px; }
.sb.wide { width: 36px; }
.sb.cur { background: #cfe2fb; border-color: #3b86e8; }
.sb svg { width: 16px; height: 16px; flex: none; }
.sb .caret { border-top-color: #555; }
.st-arrow { position: absolute; left: 710px; top: 7px; width: 16px; height: 16px; }
.st-msg { position: absolute; left: 729px; top: 7px; line-height: 16px; }

.taskbar { height: 11px; background: #d3e7ee; position: relative; flex: none; }
.tk { position: absolute; top: 9px; height: 4px; border-radius: 3px 3px 0 0; }
.tk-g { left: 220px; width: 23px; background: #8a9aaa; }
.tk-t { left: 274px; width: 17px; background: #20b8c0; }
.tk-active { position: absolute; left: 306px; top: 0; width: 45px; height: 11px; background: #e8f1f6; border-right: 1px solid #b8c8d0; overflow: hidden; }
.tk-b { left: 12px; width: 23px; background: #2a6ff0; }

.tip { position: absolute; left: 1339px; top: 22px; width: 189px; height: 96px; background: #3a8efd; border-radius: 5px; color: #fff; z-index: 5; font-family: "Noto Sans CJK SC", sans-serif; }
.tip-arrow { position: absolute; left: 19px; top: -8px; width: 0; height: 0; border-left: 6px solid transparent; border-right: 6px solid transparent; border-bottom: 8px solid #3a8efd; }
.tip-x { position: absolute; right: 6px; top: 4px; width: 10px; height: 10px; }
.tip-text { padding: 12px 0 0 9px; line-height: 18px; white-space: nowrap; height: 71px; }
.tip-foot { height: 25px; line-height: 23px; padding-left: 10px; background: #5fa6ff; border-radius: 0 0 5px 5px; color: rgba(255, 255, 255, .55); }
.mark { position: absolute; left: 1640px; top: 834px; display: flex; flex-direction: column; gap: 6px; font-size: 18px; line-height: 20px; color: #8a8a8a; font-family: "Noto Sans CJK SC", sans-serif; }
</style>
